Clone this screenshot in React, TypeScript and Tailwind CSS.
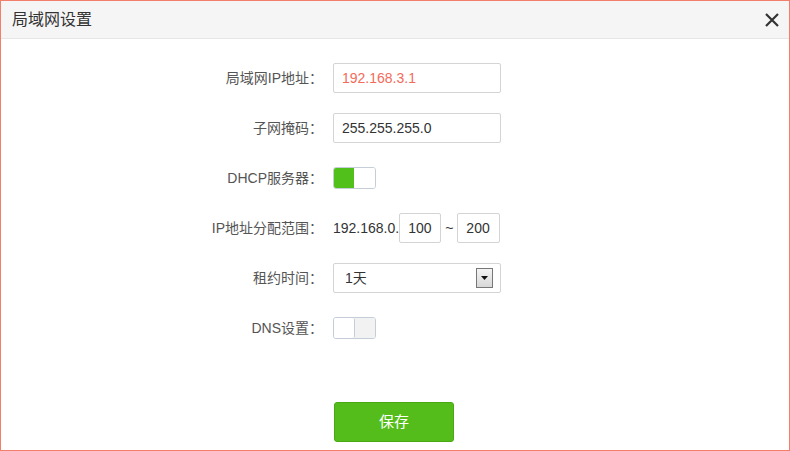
import type { ReactNode } from "react";

const font = { fontFamily: '"Liberation Sans", "Noto Sans CJK SC", sans-serif' };

function Row({ label, children }: { label: string; children: ReactNode }) {
  return (
    <div className="flex h-[30px] items-center">
      <div className="w-[322px] text-right text-[14px] text-[#555]">{label}</div>
      <div className="ml-[10px] flex items-center">{children}</div>
    </div>
  );
}

function Toggle({ on }: { on: boolean }) {
  return (
    <div className="flex h-[22px] w-[43px] overflow-hidden rounded-[3px] border border-[#c5ced8]">
      {on ? (
        <>
          <div className="w-[20px] bg-[#52c01a]" />
          <div className="flex-1 bg-white" />
        </>
      ) : (
        <>
          <div className="w-[21px] rounded-[2px] border-r border-[#c5ced8] bg-white" />
          <div className="flex-1 bg-[#f2f2f2]" />
        </>
      )}
    </div>
  );
}

function Field({ value, className = "", red = false }: { value: string; className?: string; red?: boolean }) {
  return (
    <div
      className={`flex h-[30px] items-center rounded-[2px] border border-[#d4d4d4] bg-white px-[8px] text-[14px] ${
        red ? "text-[#f26b5b]" : "text-[#333]"
      } ${className}`}
    >
      {value}
    </div>
  );
}

export default function App() {
  return (
    <div className="h-[451px] w-[790px] border border-[#f47e6c] bg-white" style={font}>
      <div className="flex h-[38px] items-center justify-between border-b border-[#e6e6e6] bg-[#f5f5f5] pl-[11px] pr-[9px]">
        <span className="text-[16px] text-[#333]">局域网设置</span>
        <svg width="16" height="16" viewBox="0 0 16 16" className="mt-[1px]">
          <path d="M2 2 L14 14 M14 2 L2 14" stroke="#333" strokeWidth="2.2" />
        </svg>
      </div>

      <div className="flex flex-col gap-[20px] pt-[24px]">
        <Row label="局域网IP地址：">
          <Field value="192.168.3.1" red className="w-[168px]" />
        </Row>
        <Row label="子网掩码：">
          <Field value="255.255.255.0" className="w-[168px]" />
        </Row>
        <Row label="DHCP服务器：">
          <Toggle on />
        </Row>
        <Row label="IP地址分配范围：">
          <span className="text-[14px] text-[#333]">192.168.0.</span>
          <Field value="100" className="w-[42px] px-[5px]" />
          <span className="mx-[4px] text-[14px] text-[#333]">~</span>
          <Field value="200" className="w-[43px] px-[5px]" />
        </Row>
        <Row label="租约时间：">
          <div className="flex h-[30px] w-[168px] items-center justify-between rounded-[2px] border border-[#d4d4d4] bg-white pl-[11px] pr-[7px] text-[14px] text-[#333]">
            <span>1天</span>
            <div className="flex h-[20px] w-[17px] items-center justify-center border border-[#777] bg-gradient-to-b from-[#f4f4f4] to-[#d8d8d8]">
              <svg width="7" height="4" viewBox="0 0 7 4">
                <path d="M0 0 H7 L3.5 4 Z" fill="#111" />
              </svg>
            </div>
          </div>
        </Row>
        <Row label="DNS设置：">
          <Toggle on={false} />
        </Row>
      </div>

      <div className="mt-[59px] pl-[333px]">
        <button className="flex h-[40px] w-[120px] items-center justify-center rounded-[3px] border border-[#4aa815] bg-[#55bd1b] text-[15px] text-white">
          保存
        </button>
      </div>
    </div>
  );
}
